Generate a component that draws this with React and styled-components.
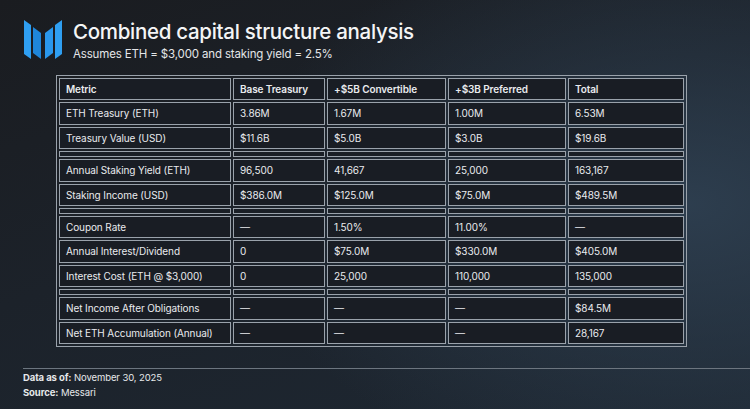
import React from "react";
import styled, { createGlobalStyle } from "styled-components";

const GlobalStyle = createGlobalStyle`
  html, body {
    margin: 0;
    padding: 0;
  }
  body {
    width: 750px;
    height: 409px;
    overflow: hidden;
    font-family: Inter, "Liberation Sans", Arial, sans-serif;
    background: #1b1f25;
  }
`;

const Page = styled.div`
  width: 750px;
  height: 409px;
  box-sizing: border-box;
  padding: 19px 0 0 23px;
  display: flex;
  flex-direction: column;
  background:
    radial-gradient(ellipse 60% 70% at 92% 50%, rgba(48, 66, 84, 0.85) 0%, rgba(40, 56, 72, 0) 100%),
    linear-gradient(160deg, #1a1c20 0%, #1c222a 45%, #1e2833 100%);
  color: #eef0f2;
`;

const Header = styled.header`
  display: flex;
  align-items: flex-start;
  gap: 9px;
`;

const TitleBlock = styled.div`
  display: flex;
  flex-direction: column;
`;

const Title = styled.h1`
  margin: 0;
  font-size: 20.5px;
  line-height: 25px;
  font-weight: 500;
  color: #f4f5f6;
  letter-spacing: -0.3px;
`;

const Subtitle = styled.p`
  margin: 3px 0 0;
  font-size: 11.5px;
  line-height: 15px;
  letter-spacing: -0.15px;
  color: #e4e6e8;
`;

const TableWrap = styled.div`
  margin: 13px 0 0 33px;
`;

const Table = styled.table`
  width: 631px;
  table-layout: fixed;
  border-collapse: separate;
  border-spacing: 2px;
  border: 1px solid #9aa2ab;
  font-size: 10px;
  letter-spacing: -0.1px;
`;

const Cell = styled.td`
  height: 20.4px;
  padding: 0 0 0 6px;
  line-height: 20.4px;
  border: 1px solid #9aa2ab;
  background: #191d24;
  color: #e9ebee;
  font-weight: ${(p) => (p.$head ? 600 : 400)};
  text-align: left;
  white-space: nowrap;
  overflow: hidden;
`;

const SpacerCell = styled.td`
  height: 4px;
  padding: 0;
  border: 1px solid #9aa2ab;
  background: #1a1f26;
`;

const Footer = styled.footer`
  margin-top: 21px;
  border-top: 1px solid #6c757f;
  padding-top: 1px;
  font-size: 9.5px;
  line-height: 15px;
  letter-spacing: -0.1px;
  color: #e6e8ea;
`;

const Label = styled.span`
  font-weight: 700;
`;

const Logo = () => (
  <svg width="41" height="41" viewBox="0 0 41 41">
    <polygon points="1,1 8,6 8,40 1,35" fill="#2f9ff2" />
    <polygon points="10,8 18,14 18,40 10,34" fill="#1f86da" />
    <polygon points="22,14 30,8 30,34 22,40" fill="#2a97ec" />
    <polygon points="32,6 39,1 39,35 32,40" fill="#2f9ff2" />
  </svg>
);

const columns = ["Metric", "Base Treasury", "+$5B Convertible", "+$3B Preferred", "Total"];
const widths = [172, 92, 119, 118, 116];

const rows = [
  ["ETH Treasury (ETH)", "3.86M", "1.67M", "1.00M", "6.53M"],
  ["Treasury Value (USD)", "$11.6B", "$5.0B", "$3.0B", "$19.6B"],
  null,
  ["Annual Staking Yield (ETH)", "96,500", "41,667", "25,000", "163,167"],
  ["Staking Income (USD)", "$386.0M", "$125.0M", "$75.0M", "$489.5M"],
  null,
  ["Coupon Rate", "—", "1.50%", "11.00%", "—"],
  ["Annual Interest/Dividend", "0", "$75.0M", "$330.0M", "$405.0M"],
  ["Interest Cost (ETH @ $3,000)", "0", "25,000", "110,000", "135,000"],
  null,
  ["Net Income After Obligations", "—", "—", "—", "$84.5M"],
  ["Net ETH Accumulation (Annual)", "—", "—", "—", "28,167"],
];

export default function App() {
  return (
    <Page>
      <GlobalStyle />
      <Header>
        <Logo />
        <TitleBlock>
          <Title>Combined capital structure analysis</Title>
          <Subtitle>Assumes ETH = $3,000 and staking yield = 2.5%</Subtitle>
        </TitleBlock>
      </Header>
      <TableWrap>
        <Table>
          <colgroup>
            {widths.map((w, i) => (
              <col key={i} style={{ width: w }} />
            ))}
          </colgroup>
          <thead>
            <tr>
              {columns.map((c) => (
                <Cell as="th" key={c} $head>
                  {c}
                </Cell>
              ))}
            </tr>
          </thead>
          <tbody>
            {rows.map((r, i) =>
              r ? (
                <tr key={i}>
                  {r.map((v, j) => (
                    <Cell key={j}>{v}</Cell>
                  ))}
                </tr>
              ) : (
                <tr key={i}>
                  {columns.map((c) => (
                    <SpacerCell key={c} />
                  ))}
                </tr>
              )
            )}
          </tbody>
        </Table>
      </TableWrap>
      <Footer>
        <div>
          <Label>Data as of:</Label> November 30, 2025
        </div>
        <div>
          <Label>Source:</Label> Messari
        </div>
      </Footer>
    </Page>
  );
}
